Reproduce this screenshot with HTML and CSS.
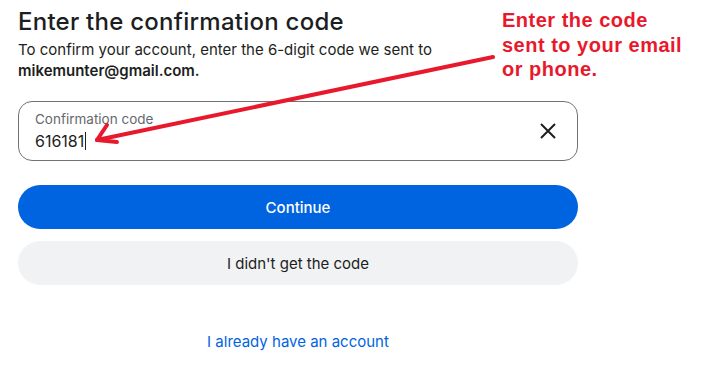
FILE: index.html
```html
<!DOCTYPE html>
<html lang="en">
<head>
<meta charset="utf-8">
<link rel="stylesheet" href="styles.css">
</head>
<body>
<main class="page">
  <h1 class="title">Enter the confirmation code</h1>
  <p class="desc">To confirm your account, enter the 6-digit code we sent to<br><strong>mikemunter@gmail.com.</strong></p>
  <div class="field">
    <div class="field-body">
      <span class="field-label">Confirmation code</span>
      <span class="field-value">616181<span class="caret"></span></span>
    </div>
    <svg class="clear" width="18" height="18" viewBox="0 0 18 18"><path d="M2 2 L16 16 M16 2 L2 16" stroke="#1c1e21" stroke-width="2" stroke-linecap="butt"/></svg>
  </div>
  <button class="btn primary">Continue</button>
  <button class="btn secondary">I didn't get the code</button>
  <a class="link" href="#">I already have an account</a>
</main>
<div class="note">Enter the code<br>sent to your email<br>or phone.</div>
<svg class="arrow" width="721" height="385" viewBox="0 0 721 385">
  <path d="M493 57 L97 140" stroke="#e8192c" stroke-width="4" fill="none" stroke-linecap="round"/>
  <path d="M107 125 L97 140 L117 142" stroke="#e8192c" stroke-width="4" fill="none" stroke-linecap="round" stroke-linejoin="round"/>
</svg>
</body>
</html>
```
FILE: styles.css
```css
html, body { margin: 0; padding: 0; background: #fff; }
body { font-family: "Inter", "Roboto", sans-serif; color: #1c1e21; width: 721px; height: 385px; overflow: hidden; position: relative; }
.page { display: flex; flex-direction: column; padding: 7px 143px 0 18px; }
.title { font-size: 24px; font-weight: 500; margin: 0; line-height: 30px; letter-spacing: 0.25px; }
.desc { font-size: 15px; line-height: 21px; margin: 2px 0 0; }
.desc strong { font-weight: 600; }
.field { margin-top: 20px; height: 60px; box-sizing: border-box; border: 1px solid #6f7378; border-radius: 14px; display: flex; align-items: center; padding: 0 20px 0 16px; }
.field-body { flex: 1; display: flex; flex-direction: column; padding-top: 0; }
.field-label { font-size: 13.5px; color: #65686c; line-height: 16px; }
.field-value { font-size: 16px; line-height: 22px; margin-top: 3px; display: flex; align-items: center; }
.caret { width: 1px; height: 18px; background: #1c1e21; margin-left: 1px; }
.clear { display: block; }
.btn { font-family: inherit; border: none; height: 44px; border-radius: 22px; font-size: 15px; width: 100%; }
.primary { margin-top: 24px; background: #0064e0; color: #fff; font-weight: 500; }
.secondary { margin-top: 12px; background: #f1f2f4; color: #1c1e21; }
.link { align-self: center; margin-top: 47px; color: #0064e0; text-decoration: none; font-size: 15px; }
.note { position: absolute; left: 502px; top: 8px; font-family: "Liberation Sans", Arial, sans-serif; font-weight: bold; font-size: 20px; letter-spacing: 0.5px; line-height: 24.5px; color: #e8192c; }
.arrow { position: absolute; left: 0; top: 0; pointer-events: none; }
```
